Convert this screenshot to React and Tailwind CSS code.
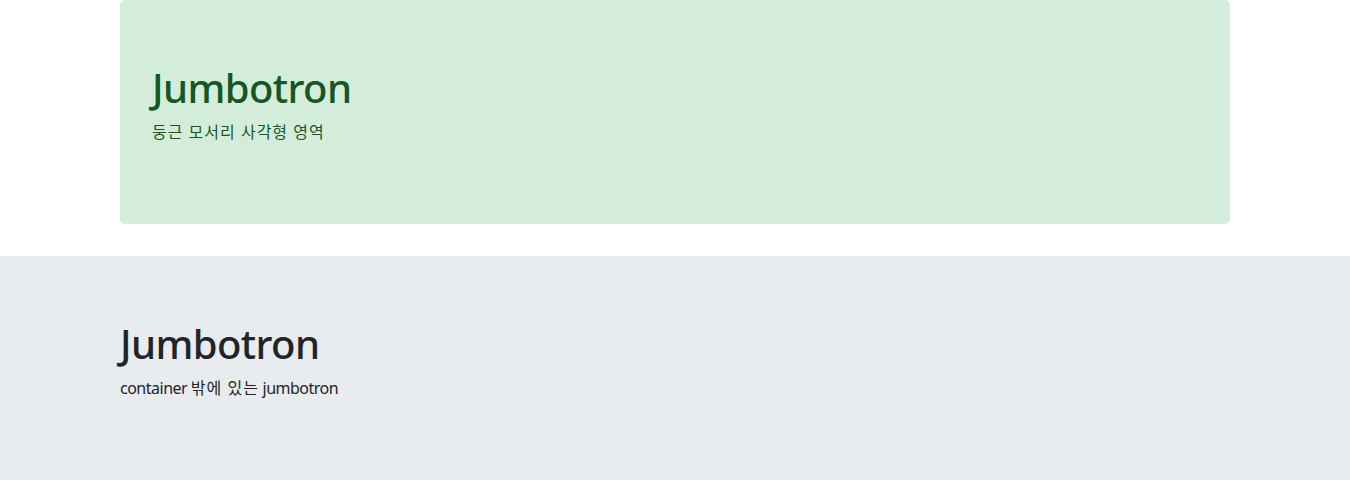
export default function App() {
  const font = { fontFamily: '"Segoe UI", "Noto Sans", "Noto Sans CJK KR", sans-serif' };
  return (
    <div className="bg-white text-[#212529] text-base leading-normal" style={font}>
      <div className="mx-auto w-[1140px] px-[15px]">
        <div className="bg-[#d4edda] text-[#155724] rounded-[4.8px] px-8 py-16 mb-8">
          <h1 className="text-[40px] leading-[1.2] font-medium tracking-[-0.6px] mb-2">Jumbotron</h1>
          <p className="mb-4 tracking-[1px]">둥근 모서리 사각형 영역</p>
        </div>
      </div>
      <div className="bg-[#e9ecef] py-16">
        <div className="mx-auto w-[1140px] px-[15px]">
          <h1 className="text-[40px] leading-[1.2] font-medium tracking-[-0.6px] mb-2">Jumbotron</h1>
          <p className="mb-4">
            <span className="tracking-[-0.5px]">container </span>
            <span className="tracking-[1px]">밖에 있는</span>
            <span className="tracking-[-0.5px]"> jumbotron</span>
          </p>
        </div>
      </div>
    </div>
  );
}
